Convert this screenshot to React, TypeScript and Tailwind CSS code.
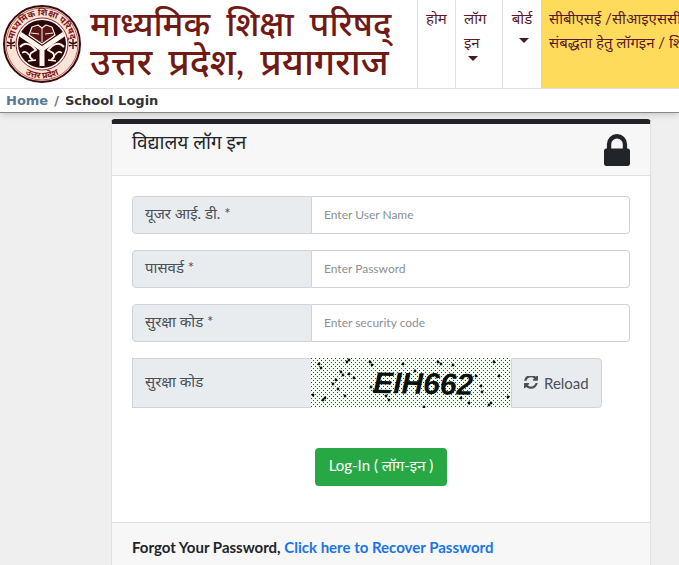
import clsx from "clsx";

const SPECKS = [
  [8, 6], [10, 10], [30, 14], [32, 17], [22, 26], [25, 22], [36, 4], [38, 2], [43, 20], [38, 16], [27, 31],
  [59, 4], [61, 7], [2, 37], [12, 42], [14, 40], [75, 38], [78, 42], [60, 29], [63, 33], [34, 38], [130, 6],
  [127, 4], [142, 7], [170, 28], [171, 34], [183, 4], [188, 18], [178, 47], [180, 45], [113, 49], [158, 45],
  [197, 39], [92, 6], [104, 13], [165, 18], [150, 40],
];

const LOCK_PATH =
  "M320 768h512v-192q0-106-75-181t-181-75-181 75-75 181v192zM1152 864v576q0 40-28 68t-68 28h-960q-40 0-68-28t-28-68v-576q0-40 28-68t68-28h32v-192q0-184 132-316t316-132 316 132 132 316v192h32q40 0 68 28t28 68z";

const REFRESH_PATH =
  "M1511 928q0 5-1 7-64 268-268 434.5t-478 166.5q-146 0-282.5-55t-243.5-157l-129 129q-19 19-45 19t-45-19-19-45v-448q0-26 19-45t45-19h448q26 0 45 19t19 45-19 45l-137 137q71 66 161 102t187 36q134 0 250-65t186-179q11-17 53-117 8-23 30-23h192q13 0 22.5 9.5t9.5 22.5zm25-800v448q0 26-19 45t-45 19h-448q-26 0-45-19t-19-45 19-45l138-138q-148-137-349-137-134 0-250 65t-186 179q-11 17-53 117-8 23-30 23h-199q-13 0-22.5-9.5t-9.5-22.5v-7q65-268 270-434.5t480-166.5q146 0 284 55.5t245 156.5l130-129q19-19 45-19t45 19 19 45z";

function BoardLogo() {
  return (
    <svg viewBox="0 0 80 80" className="size-20 shrink-0" role="img" aria-label="UP Board">
      <defs>
        <path id="top-arc" d="M11.5 40a28.5 28.5 0 0 1 57 0" />
        <path id="bottom-arc" d="M5.5 40a34.5 34.5 0 0 0 69 0" />
      </defs>
      <circle cx="40" cy="40" r="38" fill="#fde3d8" stroke="#3a0a0c" strokeWidth="2" />
      <circle cx="40" cy="40" r="36" fill="none" stroke="#a5443c" strokeWidth="0.8" />
      <circle cx="40" cy="40" r="26" fill="#fff" stroke="#8d2a24" strokeWidth="1" />
      <circle cx="40" cy="40" r="24" fill="#2a0607" />
      <g fill="none" stroke="#fff4ee" strokeLinejoin="round">
        <path d="M18 30l22 15 22-15M40 43v19" strokeWidth="5" />
        <path d="M27 31l3-8 6-2 4 3 4-3 6 2 3 8-13 9z" fill="#5a1414" strokeWidth="1.2" />
        <path d="M40 24v14M29 29l8 1M51 29l-8 1" strokeWidth="1" />
        <path d="M18 43q5-6 12-1l4 4-5 3q-3 4 2 7M62 43q-5-6-12-1l-4 4 5 3q3 4-2 7" strokeWidth="2" />
        <path d="M20 49q4-3 7 2M60 49q-4-3-7 2M26 57l8-1M54 57l-8-1" strokeWidth="1.5" />
      </g>
      <path d="M5 38l8 4M5 42l8-4M9 35v10M67 38l8 4M67 42l8-4M71 35v10" stroke="#3c0909" strokeWidth="1.4" />
      <g fill="#7b1718" fontSize="9" fontWeight="bold" textAnchor="middle">
        <text>
          <textPath href="#top-arc" startOffset="50%">माध्यमिक शिक्षा परिषद्</textPath>
        </text>
        <text>
          <textPath href="#bottom-arc" startOffset="50%">उत्तर प्रदेश</textPath>
        </text>
      </g>
    </svg>
  );
}

function Caret({ className }: { className?: string }) {
  return <span className={clsx("border-x-5 border-t-5 border-x-transparent border-t-[#4a1a22]", className)} />;
}

function Captcha() {
  return (
    <svg viewBox="0 0 200 50" className="h-[50px] w-[200px] shrink-0" role="img" aria-label="EIH662">
      <defs>
        <pattern id="dots" width="4" height="4" patternUnits="userSpaceOnUse" shapeRendering="crispEdges">
          <rect width="4" height="4" fill="#f4fdf2" />
          <rect width="1" height="1" fill="#2c4a30" />
          <rect x="2" y="2" width="1" height="1" fill="#2c4a30" />
        </pattern>
      </defs>
      <rect width="200" height="50" fill="url(#dots)" />
      {SPECKS.map(([x, y]) => (
        <circle key={`${x}-${y}`} cx={x} cy={y} r="1.4" fill="#0b140c" />
      ))}
      <text
        x="62"
        y="35"
        fill="#0b120c"
        fontFamily="Liberation Sans"
        fontSize="30"
        fontStyle="italic"
        fontWeight="bold"
        transform="rotate(1 62 35)"
      >
        EIH662
      </text>
    </svg>
  );
}

interface FieldProps {
  id: string;
  label: string;
  placeholder: string;
  type?: string;
}

function Field({ id, label, placeholder, type = "text" }: FieldProps) {
  return (
    <div className="flex h-[38px]">
      <label
        htmlFor={id}
        className="flex w-[180px] shrink-0 items-center rounded-l border border-[#ced4da] bg-[#e9ecef] px-3 pb-1 text-[#495057]"
      >
        {label}
      </label>
      <input
        id={id}
        type={type}
        placeholder={placeholder}
        className="min-w-0 flex-1 rounded-r border border-l-0 border-[#ced4da] bg-white px-3 text-xs placeholder:text-[#8b9094]"
      />
    </div>
  );
}

export default function App() {
  return (
    <div className="min-h-screen overflow-x-hidden bg-[#efefef] font-['Lato','Noto_Sans',sans-serif] text-[15px] text-[#212529]">
      <header className="flex h-[89px] overflow-hidden border-b border-[#dee2e6] bg-white">
        <div className="flex w-[417px] shrink-0 gap-2 pt-1 pl-0.5">
          <BoardLogo />
          <h1 className="leading-[38px] font-medium whitespace-nowrap text-[#701a16]">
            <span className="flex gap-4 text-[34px]">
              <span>माध्यमिक</span> <span>शिक्षा</span> <span>परिषद्</span>
            </span>
            <span className="flex gap-4 text-[37px]">
              <span>उत्तर</span> <span>प्रदेश,</span> <span>प्रयागराज</span>
            </span>
          </h1>
        </div>
        <nav className="flex shrink-0 leading-6 text-[#5a1a2a]">
          <a href="#" className="w-[38px] border-l border-[#dee2e6] pt-1.5 pl-2">
            होम
          </a>
          <button type="button" className="flex w-[47px] flex-col items-start border-l border-[#dee2e6] pt-1.5 pl-2 text-left">
            <span>लॉग</span>
            <span>इन</span>
            <Caret className="mt-0.5 ml-1" />
          </button>
          <button type="button" className="flex w-[39px] flex-col items-center border-l border-[#dee2e6] pt-1.5">
            <span>बोर्ड</span>
            <Caret className="mt-2 ml-1" />
          </button>
          <a href="#" className="bg-[#ffdb5c] px-2 pt-1.5 whitespace-nowrap">
            सीबीएसई /सीआइएससीई
            <br />
            संबद्धता हेतु लॉगइन / शिक्षक
          </a>
        </nav>
      </header>
      <nav
        aria-label="Breadcrumb"
        className="flex h-6 items-center gap-1.5 border-b border-[#888] bg-white px-1.5 font-['DejaVu_Sans',sans-serif] text-[13px] font-bold shadow-md"
      >
        <a href="#" className="text-[#5b7796]">
          Home
        </a>
        <span className="text-[#6c757d]">/</span>
        <span className="text-[#333]">School Login</span>
      </nav>
      <main className="pt-1.5 pr-7 pl-[111px]">
        <form className="rounded-t border-x border-t-5 border-x-[#dfdfdf] border-t-[#212529] bg-white">
          <div className="flex h-[52px] justify-between border-b border-[#dfdfdf] bg-[#f7f7f7] px-5">
            <h2 className="pt-1 text-[19px] leading-7">विद्यालय लॉग इन</h2>
            <svg viewBox="0 128 1152 1408" className="mt-2.5 h-8 w-[26px]" fill="currentColor" aria-hidden="true">
              <path d={LOCK_PATH} />
            </svg>
          </div>
          <div className="flex flex-col gap-4 px-5 pt-5 pb-9">
            <Field id="user" label="यूजर आई. डी. *" placeholder="Enter User Name" />
            <Field id="password" label="पासवर्ड *" placeholder="Enter Password" type="password" />
            <Field id="code" label="सुरक्षा कोड *" placeholder="Enter security code" />
            <div className="flex h-[50px]">
              <span className="flex w-[179px] shrink-0 items-center border border-r-0 border-[#ced4da] bg-[#e9ecef] px-3 pb-1 text-[#495057]">
                सुरक्षा कोड
              </span>
              <Captcha />
              <button
                type="button"
                className="flex items-center gap-1.5 rounded-r border border-[#ced4da] bg-[#e9ecef] px-3 text-[#495057]"
              >
                <svg viewBox="0 128 1536 1536" className="size-3.5" fill="currentColor" aria-hidden="true">
                  <path d={REFRESH_PATH} />
                </svg>
                Reload
              </button>
            </div>
            <button
              type="submit"
              className="mt-6 h-[38px] self-center rounded bg-[#28a745] px-3.5 pb-1 whitespace-nowrap text-white"
            >
              Log-In ( लॉग-इन )
            </button>
          </div>
          <div className="border-t border-[#dfdfdf] bg-[#f7f7f7] px-5 py-3 leading-6 font-bold">
            Forgot Your Password,{" "}
            <a href="#" className="text-[#1a73e8]">
              Click here to Recover Password
            </a>
          </div>
        </form>
      </main>
    </div>
  );
}
